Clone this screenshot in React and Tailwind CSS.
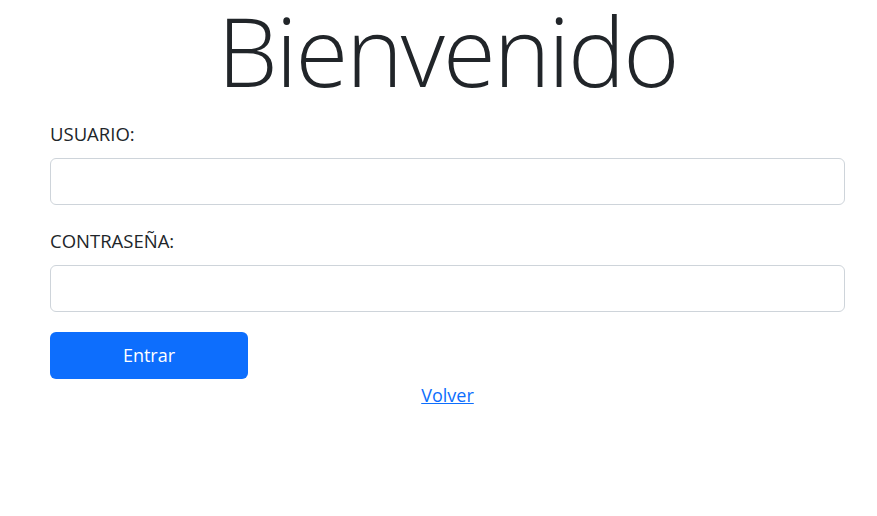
export default function App() {
  return (
    <div className="min-h-screen bg-white text-[#212529]" style={{ fontFamily: '"Open Sans", "Noto Sans", sans-serif' }}>
      <div className="pl-[50px] pr-[32px]">
        <h1 className="text-center text-[96px] font-light leading-[100px] tracking-[-2px]">Bienvenido</h1>
        <form className="flex flex-col mt-[21px]" onSubmit={(e) => e.preventDefault()}>
          <label className="text-[18.5px] leading-[27px] -mt-[1px] mb-[1px]">USUARIO:</label>
          <input type="text" className="mt-[10px] h-[47px] w-full rounded-[6px] border border-[#ced4da] px-3 outline-none" />
          <label className="mt-[22px] text-[18.5px] leading-[27px]">CONTRASEÑA:</label>
          <input type="password" className="mt-[11px] h-[47px] w-full rounded-[6px] border border-[#ced4da] px-3 outline-none" />
          <button type="submit" className="mt-[20px] h-[47px] w-[198px] rounded-[6px] bg-[#0d6efd] text-[18px] text-white">Entrar</button>
          <div className="text-center mt-[3px]">
            <a href="#" className="text-[18px] leading-[27px] text-[#0d6efd] underline">Volver</a>
          </div>
        </form>
      </div>
    </div>
  );
}
